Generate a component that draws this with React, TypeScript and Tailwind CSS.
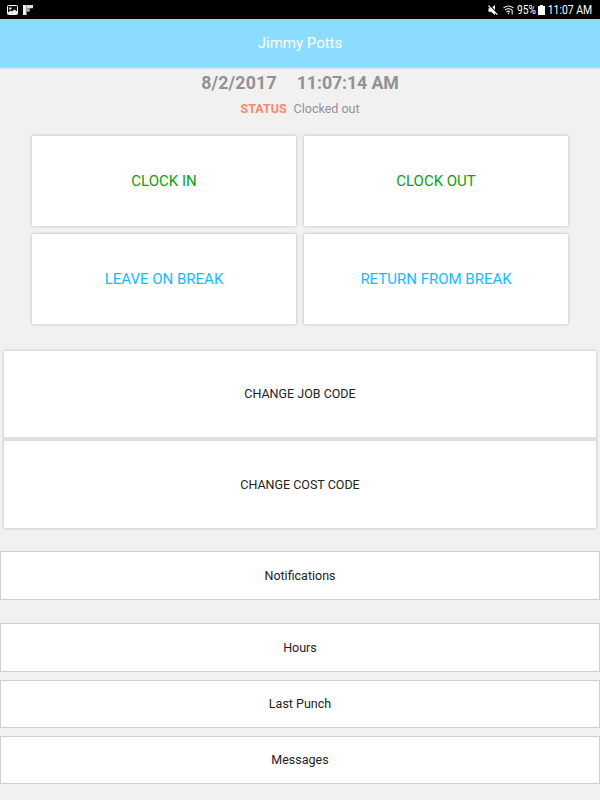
const punchActions = [
  { label: 'CLOCK IN', color: 'text-[#0ba00b]' },
  { label: 'CLOCK OUT', color: 'text-[#0ba00b]' },
  { label: 'LEAVE ON BREAK', color: 'text-[#16bbff]' },
  { label: 'RETURN FROM BREAK', color: 'text-[#16bbff]' },
];

const StatusBar = () => (
  <div className="flex h-[19px] items-center justify-between bg-black pl-[7px] pr-2 text-white">
    <div className="flex items-center gap-[5px]">
      <svg width="11" height="10" viewBox="0 0 11 10">
        <rect x="0.5" y="0.5" width="10" height="9" rx="0.8" fill="#111" stroke="#fff" />
        <path d="M1 9V7.5L3.5 5.5 5 6.5 7.5 4.5 10 6.5V9Z" fill="#eee" />
        <path d="M2 2.5H4.5V4.5H2Z" fill="#ddd" />
      </svg>
      <svg width="10" height="10" viewBox="0 0 10 10">
        <path d="M0 0H3.5V10H0Z" fill="#eee" />
        <path d="M3.5 0H10V3.3H3.5Z" fill="#ddd" />
        <path d="M3.5 3.3H6.7V6.6H3.5Z" fill="#bbb" />
      </svg>
    </div>
    <div className="flex items-center">
      <svg className="mr-[5px]" width="10" height="10" viewBox="0 0 10 10">
        <path d="M0.5 3.2H3L7 0V10L3 6.8H0.5Z" fill="#fff" />
        <path d="M1.2 0L10 8.8" stroke="#000" strokeWidth="1.2" />
        <path d="M0.4 0.6L9.4 9.6" stroke="#fff" strokeWidth="1.2" />
      </svg>
      <svg className="mr-[3px]" width="11" height="10" viewBox="0 0 11 10" fill="none" stroke="#ddd">
        <path d="M0.5 3Q5.5 -1 10.5 3" strokeWidth="1.1" />
        <path d="M2 5Q5.5 2.2 9 5" strokeWidth="1.1" />
        <path d="M3.6 7Q5.5 5.4 7 7" strokeWidth="1.1" />
        <path d="M5.5 7.5V9.3M9.2 5V9.5" strokeWidth="1.2" />
      </svg>
      <span className="w-[19px] origin-left scale-x-[0.85] whitespace-nowrap text-[12px] leading-none">95%</span>
      <svg className="ml-[2px] mr-[3px]" width="7" height="10" viewBox="0 0 7 10" fill="#fff">
        <path d="M2 0H5V1H7V10H0V1H2Z" />
      </svg>
      <span className="flex w-[44px] justify-end whitespace-nowrap text-[12px] leading-none">
        <span className="origin-right scale-x-[0.87]">11:07 AM</span>
      </span>
    </div>
  </div>
);

const ListButton = ({ label }: { label: string }) => (
  <button className="block h-12 w-full border border-[#cfcfcf] bg-white text-[12.5px] text-[#222] first:h-[49px] first:pt-0.5">
    {label}
  </button>
);

const App = () => {
  return (
    <div className="h-[800px] w-[600px] overflow-hidden bg-[#f1f1f1] font-['Roboto','Liberation_Sans',sans-serif]">
      <StatusBar />
      <header className="flex h-12 items-center justify-center bg-[#8cdcff] text-[15px] text-white shadow-[0_1px_2px_rgba(0,0,0,0.2)]">
        Jimmy Potts
      </header>

      <div className="flex h-8 items-center justify-center gap-5 text-[17.8px] font-bold text-[#929292]">
        <span className="tracking-[0.15px]">8/2/2017</span>
        <span className="tracking-[-0.1px]">11:07:14 AM</span>
      </div>
      <div className="flex h-5 items-center justify-center gap-[7px] text-[12.5px] text-[#929292]">
        <span className="font-bold text-[#fa8870]">STATUS</span>
        <span>Clocked out</span>
      </div>

      <div className="mx-8 mt-[17px] grid grid-cols-2 gap-2">
        {punchActions.map(({ label, color }) => (
          <button key={label} className={`h-[90px] bg-white text-[15px] shadow-[0_0_3px_rgba(0,0,0,0.25)] ${color}`}>
            {label}
          </button>
        ))}
      </div>

      <div className="mx-1 mt-[27px] flex flex-col bg-white shadow-[0_0_3px_rgba(0,0,0,0.25)]">
        <button className="h-[86px] text-[12.5px] text-[#222]">
          CHANGE JOB CODE
        </button>
        <button className="h-[91px] border-t-4 border-[#e0e0e0] pt-0.5 text-[12.5px] text-[#222]">
          CHANGE COST CODE
        </button>
      </div>

      <div className="mt-[23px]">
        <ListButton label="Notifications" />
      </div>
      <div className="mt-[23px] flex flex-col gap-2">
        <ListButton label="Hours" />
        <ListButton label="Last Punch" />
        <ListButton label="Messages" />
      </div>
    </div>
  );
};

export default App;
